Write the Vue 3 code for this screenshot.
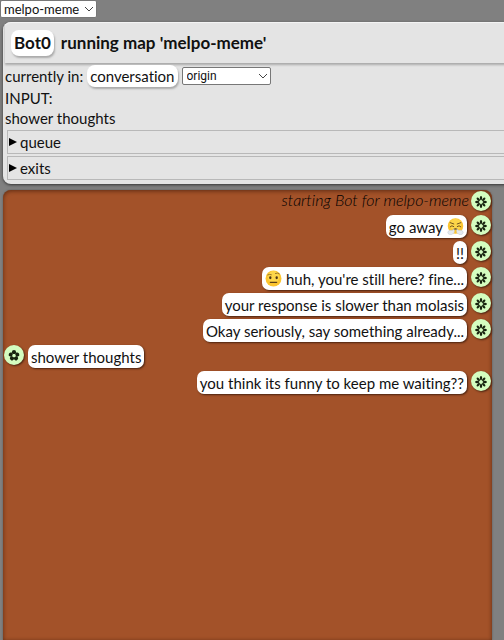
<script setup>
import { ref } from 'vue'

const map = ref('melpo-meme')
const target = ref('origin')
const messages = [
  { from: 'bot', text: 'starting Bot for melpo-meme', log: true },
  { from: 'bot', text: 'go away', after: 'huff' },
  { from: 'bot', text: '!!' },
  { from: 'bot', text: "huh, you're still here? fine...", before: 'brow' },
  { from: 'bot', text: 'your response is slower than molasis' },
  { from: 'bot', text: 'Okay seriously, say something already...' },
  { from: 'user', text: 'shower thoughts' },
  { from: 'bot', text: 'you think its funny to keep me waiting??' }
]
const petals = [0, 45, 90, 135, 180, 225, 270, 315]
const userPetals = [0, 72, 144, 216, 288]
</script>

<template>
  <main class="page">
    <div class="picker">
      <select v-model="map" class="select map-select" aria-label="Map">
        <option>melpo-meme</option>
      </select>
      <svg class="chevron" viewBox="0 0 8 6" aria-hidden="true"><path d="M0 1l4 4 4-4" /></svg>
    </div>

    <section class="panel">
      <h1 class="title"><span class="chip">Bot0</span><span>running map 'melpo-meme'</span></h1>
      <div class="info">
        <div class="state">
          <label for="target">currently in:</label>
          <span class="chip">conversation</span>
          <div class="picker">
            <select id="target" v-model="target" class="select target-select">
              <option>origin</option>
            </select>
            <svg class="chevron" viewBox="0 0 8 6" aria-hidden="true"><path d="M0 1l4 4 4-4" /></svg>
          </div>
        </div>
        <div class="line">INPUT:</div>
        <div class="line">shower thoughts</div>
        <details v-for="name in ['queue', 'exits']" :key="name" class="fold">
          <summary>
            <svg class="marker" viewBox="0 0 8 10" aria-hidden="true"><path d="M0 1l8 4-8 4z" /></svg>{{ name }}
          </summary>
        </details>
      </div>
    </section>

    <section class="chat">
      <div v-for="(m, i) in messages" :key="i" class="row" :class="[m.from, { log: m.log }]">
        <div class="bubble">
          <svg v-if="m.before" class="emoji" viewBox="0 0 16 16" aria-hidden="true">
            <circle cx="8" cy="8" r="7.5" fill="#fcc52f" />
            <circle cx="8" cy="6.5" r="5.5" fill="#fdd64a" />
            <path d="M2.6 4.6q1.6-1 3.4-.2M9.8 3.2q1.8-1 3.6.4" fill="none" stroke="#8a6420" stroke-width=".8" stroke-linecap="round" />
            <ellipse cx="5" cy="7.3" rx="1.1" ry="1.4" fill="#4c3216" />
            <ellipse cx="11" cy="7.3" rx="1.1" ry="1.4" fill="#4c3216" />
            <path d="M5 11.6h6" fill="none" stroke="#5c3f16" stroke-width="1.1" stroke-linecap="round" />
          </svg>
          <span>{{ m.text }}</span>
          <svg v-if="m.after" class="emoji" viewBox="0 0 16 16" aria-hidden="true">
            <circle cx="8" cy="7.6" r="7.3" fill="#fcc52f" />
            <circle cx="8" cy="6" r="5.4" fill="#fdd64a" />
            <path d="M3 4.4l3.4 1.2M13 4.4L9.6 5.6M3 8.2q1.6-1.9 3.4-.2M9.6 8q1.8-1.7 3.4.2" fill="none" stroke="#5c3f16" stroke-width=".8" stroke-linecap="round" />
            <path d="M6.2 10.8q1.8-1.1 3.6 0" fill="none" stroke="#5c3f16" stroke-width="1" />
            <path d="M6.6 10.2c-1 2-2 1.2-3.6 1.4-2 .2-2.8 1.8-1.9 3 .9 1.5 3.1 1.3 4 .4 1.6 0 2.4-2.2 1.5-4.8zM9.4 10.2c1 2 2 1.2 3.6 1.4 2 .2 2.8 1.8 1.9 3-.9 1.5-3.1 1.3-4 .4-1.6 0-2.4-2.2-1.5-4.8z" fill="#e3e9ef" stroke="#b9c2ca" stroke-width=".4" />
          </svg>
        </div>
        <svg class="avatar" viewBox="0 0 20 20" aria-hidden="true">
          <g v-if="m.from === 'bot'">
            <circle cx="10" cy="11" r="2.4" fill="none" stroke="#17230f" stroke-width=".6" />
            <ellipse v-for="a in petals" :key="a" cx="10" cy="7.1" rx="1.2" ry="2" :transform="`rotate(${a} 10 11)`" />
          </g>
          <g v-else>
            <circle v-for="a in userPetals" :key="a" cx="10" cy="7.2" r="2.1" :transform="`rotate(${a} 10 10.6)`" />
            <circle cx="10" cy="10.6" r="1.5" fill="#d4fdc0" />
          </g>
        </svg>
      </div>
    </section>
  </main>
</template>

<style>
body {
  background: #808080;
}
</style>

<style scoped>
.page {
  box-sizing: border-box;
  min-height: 100vh;
  display: flex;
  flex-direction: column;
  overflow: hidden;
  background: #808080;
  color: #111;
  font: 15px/20px Lato, "Noto Sans", sans-serif;
  font-variant-ligatures: none;
}
.picker {
  display: grid;
  align-items: center;
  justify-content: start;
}
.select,
.chevron {
  grid-area: 1 / 1;
}
.select {
  appearance: none;
  box-sizing: border-box;
  margin: 0;
  border: 1px solid #777;
  border-radius: 2px;
  background: #fff;
  color: #111;
  font: 13px/14px Lato, "Noto Sans", sans-serif;
}
.map-select {
  width: 97px;
  height: 18px;
  padding: 0 3px;
}
.target-select {
  width: 89px;
  height: 18px;
  padding: 0 4px;
  font: 12px/14px Roboto, sans-serif;
}
.chevron {
  justify-self: end;
  width: 8px;
  height: 6px;
  margin-right: 4px;
  fill: none;
  stroke: #444;
  pointer-events: none;
}
.panel {
  margin: 4px -12px 0 3px;
  padding: 0 2px 4px;
  border-radius: 8px;
  background: #e4e4e4;
  box-shadow: 0 1px 3px #333, inset 0 1px 1px #f4f4f4;
}
.title {
  display: flex;
  align-items: center;
  gap: 7px;
  height: 41px;
  margin: 0;
  padding: 0 6px;
  box-shadow: 0 2px 2px #aaa;
  font-size: 17px;
  line-height: 26px;
  font-weight: 700;
}
.chip {
  padding: 0 3px;
  border-radius: 8px;
  background: #fff;
  box-shadow: 1px 2px 2px #aaa;
}
.state {
  display: flex;
  align-items: center;
  gap: 4px;
  height: 25px;
  line-height: 22px;
}
.line {
  height: 20px;
}
.fold {
  margin: 2px 2px 0;
  border: 1px solid #b8b8b8;
}
.fold summary {
  display: flex;
  align-items: center;
  gap: 3px;
  height: 22px;
  padding-left: 1px;
  list-style: none;
}
.marker {
  width: 8px;
  height: 10px;
}
.chat {
  flex: 1;
  display: flex;
  flex-direction: column;
  gap: 3px;
  margin: 6px 12px 0 3px;
  padding: 1px 1px 0;
  border-radius: 8px 8px 0 0;
  background: #a35229;
  box-shadow: inset 0 1px 4px #5c2b12, 0 0 2px #555;
}
.row {
  display: flex;
  align-items: flex-start;
  justify-content: flex-end;
  gap: 4px;
}
.row.user {
  flex-direction: row-reverse;
}
.bubble {
  display: flex;
  align-items: center;
  gap: 4px;
  height: 23px;
  padding: 0 3px;
  border-radius: 7px;
  background: #fff;
  box-shadow: 1px 1px 2px #4a2310;
}
.log .bubble {
  height: 21px;
  padding: 0;
  background: none;
  box-shadow: none;
  color: #000;
  font-size: 16px;
  font-weight: 300;
  font-style: italic;
  line-height: 18px;
  align-items: flex-start;
}
.log {
  gap: 2px;
}
.emoji {
  width: 17px;
  height: 17px;
}
.avatar {
  width: 20px;
  height: 20px;
  border-radius: 50%;
  background: #d4fdc0;
  box-shadow: 1px 1px 2px #4a2310;
  fill: #17230f;
}
</style>
